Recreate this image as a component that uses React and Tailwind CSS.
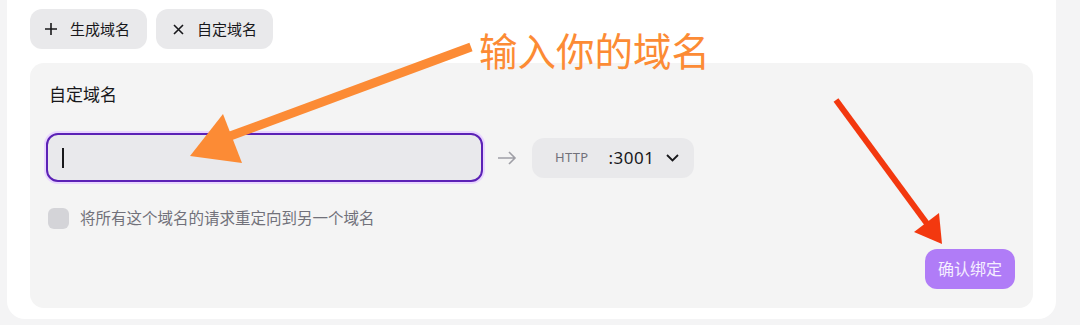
import React from "react";

const font = { fontFamily: '"Noto Sans", "Noto Sans CJK SC", sans-serif' };

function Annotations() {
    return (
        <svg className="absolute inset-0 pointer-events-none" width="1080" height="325" viewBox="0 0 1080 325">
            {/* orange arrow */}
            <line x1="471" y1="47" x2="222" y2="139" stroke="#fc8b35" strokeWidth="9" />
            <polygon points="190,156 223,114 242,163" fill="#fc8b35" />
            {/* red arrow */}
            <line x1="836" y1="100" x2="928" y2="225" stroke="#f3380f" strokeWidth="6" />
            <polygon points="942,244 914,232 939,213" fill="#f3380f" />
            <text x="479" y="66" fill="#fc8b35" fontSize="38.5" style={{ fontFamily: '"Noto Sans CJK SC", sans-serif' }}>
                输入你的域名
            </text>
        </svg>
    );
}

function App() {
    return (
        <div className="relative w-[1080px] h-[325px] bg-[#f4f4f5] overflow-hidden" style={font}>
            <div className="ml-[7px] w-[1049px] bg-white rounded-b-[18px] px-[23px] pt-[9px] pb-[11px]">
                {/* tabs */}
                <div className="flex gap-[9px]">
                    <button className="h-10 w-[117px] flex items-center pl-[14px] gap-[12px] rounded-xl bg-[#e9e9eb] text-[15px] text-[#18181b]">
                        <svg width="14" height="14" viewBox="0 0 14 14" fill="none" stroke="#18181b" strokeWidth="1.6">
                            <path d="M7 1v12M1 7h12" />
                        </svg>
                        生成域名
                    </button>
                    <button className="h-10 w-[117px] flex items-center pl-[17px] gap-[13px] rounded-xl bg-[#e9e9eb] text-[15px] text-[#18181b]">
                        <svg width="11" height="11" viewBox="0 0 11 11" fill="none" stroke="#18181b" strokeWidth="1.6">
                            <path d="M1 1l9 9M10 1l-9 9" />
                        </svg>
                        自定域名
                    </button>
                </div>

                {/* panel */}
                <div className="mt-[14px] bg-[#f4f4f4] rounded-[14px] pl-[16px] pr-[18px] pt-[20px] pb-[19px]">
                    <div className="pl-[3px] text-[17px] text-[#18181b] leading-6">自定域名</div>

                    <div className="mt-[26px] flex items-center">
                        <div className="w-[437px] h-[49px] rounded-[12px] border-2 border-[#5b21b6] ring-2 ring-[#e9d5ff] bg-[#e9e9ec] flex items-center pl-[14px]">
                            <div className="w-[1.5px] h-[20px] bg-[#18181b]" />
                        </div>
                        <svg className="ml-[14px]" width="20" height="14" viewBox="0 0 20 14" fill="none" stroke="#9f9fa6" strokeWidth="1.6">
                            <path d="M1 7h17M12 1l6 6-6 6" />
                        </svg>
                        <div className="ml-[15px] w-[162px] h-10 rounded-xl bg-[#e9e9eb] flex items-center pl-[23px]">
                            <span className="text-[13px] text-[#71717a] tracking-[0.3px]">HTTP</span>
                            <span className="ml-[20px] text-[17px] text-[#18181b] tracking-[0.5px]">:3001</span>
                            <svg className="ml-[12px]" width="13" height="8" viewBox="0 0 13 8" fill="none" stroke="#18181b" strokeWidth="1.8">
                                <path d="M1 1l5.5 5.5L12 1" />
                            </svg>
                        </div>
                    </div>

                    <div className="mt-[25px] flex items-center pl-[2px]">
                        <div className="w-[21px] h-[21px] rounded-[6px] bg-[#d4d4d8]" />
                        <span className="ml-[11px] text-[15.5px] text-[#71717a]">将所有这个域名的请求重定向到另一个域名</span>
                    </div>

                    <div className="mt-[19px] flex justify-end">
                        <button className="h-10 w-[90px] rounded-xl bg-[#b07cf7] text-[16px] text-[#f5efff]">确认绑定</button>
                    </div>
                </div>
            </div>
            <Annotations />
        </div>
    );
}

export default App;
